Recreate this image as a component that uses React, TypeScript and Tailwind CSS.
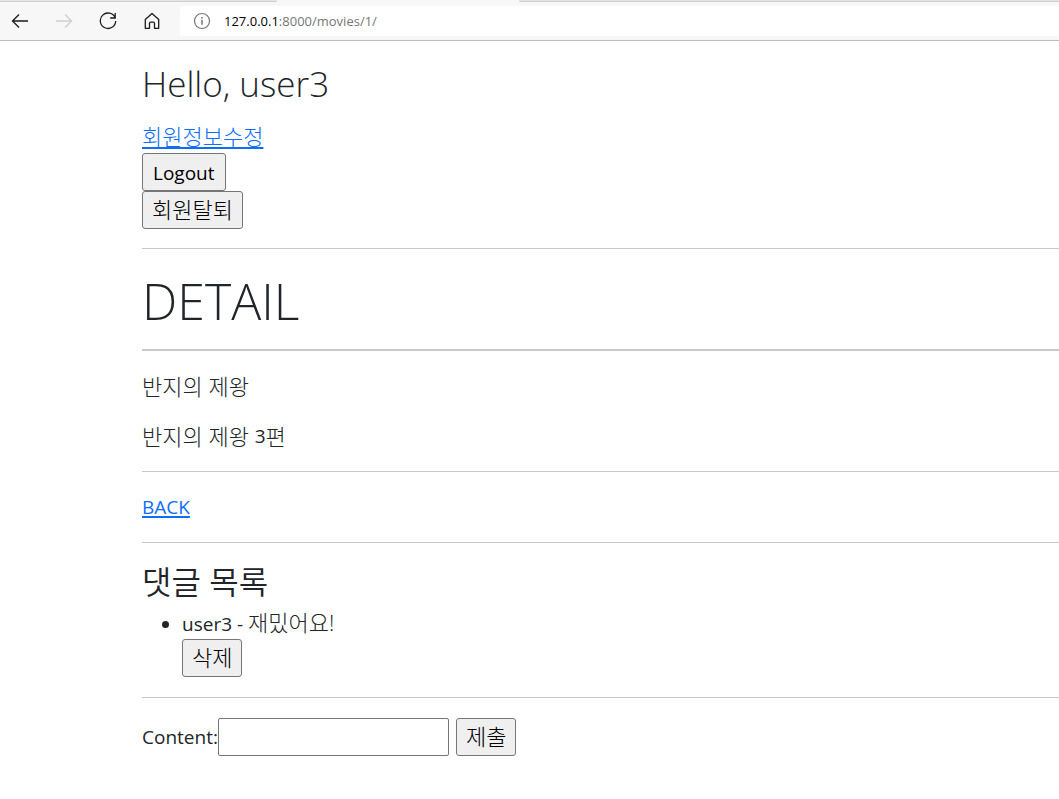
import type { ReactNode } from "react";

const icon = {
  width: 18,
  height: 18,
  viewBox: "0 0 18 18",
  fill: "none",
  stroke: "currentColor",
  strokeWidth: 1.3,
};

function Ko({ children }: { children: ReactNode }) {
  return <span className="text-[22px] font-light leading-none">{children}</span>;
}

const buttonBase =
  "flex h-[38px] items-center justify-center rounded-[3px] border border-[#767676] bg-[#efefef] text-black";

function Button({ children }: { children: string }) {
  return (
    <button type="button" className={`${buttonBase} px-[10px] pt-0.5`}>
      {children}
    </button>
  );
}

function KoButton({ children }: { children: string }) {
  return (
    <button type="button" className={`${buttonBase} px-[9px] pb-0.5`}>
      <Ko>{children}</Ko>
    </button>
  );
}

function Rule() {
  return <hr className="border-t border-[#c8c9ca]" />;
}

function BrowserBar() {
  return (
    <header className="border-b border-[#bdbdbd] bg-[#f7f7f7]">
      <div className="flex h-[2px]">
        <div className="w-[277px] rounded-br-sm border-b border-[#cfcfcf] bg-[#e4e4e4]" />
        <div className="w-[242px]" />
        <div className="flex-1 rounded-bl-sm border-b border-[#cfcfcf] bg-[#e4e4e4]" />
      </div>
      <div className="flex h-[38px] items-center">
        <nav className="flex w-[180px] shrink-0 items-center gap-[26px] pl-[11px] text-[#1b1b1b]">
          <button type="button" aria-label="Back">
            <svg {...icon}>
              <path d="M17 9H1.500M8 2.500 1.500 9 8 15.500" />
            </svg>
          </button>
          <button type="button" aria-label="Forward" className="text-[#cfcfcf]">
            <svg {...icon}>
              <path d="M1 9h15.500M10 2.500 16.500 9 10 15.500" />
            </svg>
          </button>
          <button type="button" aria-label="Refresh">
            <svg {...icon}>
              <path d="M16.200 6A7.700 7.700 0 1 0 16.700 9M16.200 1v5h-5" />
            </svg>
          </button>
          <button type="button" aria-label="Home">
            <svg {...icon} strokeLinejoin="round">
              <path d="M2.300 7.400 9 1.500l6.700 5.900V16.300h-4.200v-4.800a1.300 1.300 0 0 0-1.300-1.300H7.800a1.300 1.300 0 0 0-1.300 1.300v4.800H2.300Z" />
            </svg>
          </button>
        </nav>
        <div className="flex h-[30px] flex-1 items-center rounded-l bg-white pl-[13px] font-['Open_Sans','Noto_Sans',sans-serif] text-[13px] text-[#767676]">
          <svg {...icon} strokeWidth={1.2} className="mr-[13px]" aria-hidden="true">
            <circle cx="9" cy="9" r="7.500" />
            <path d="M9 7.800v5M9 5v1.500" strokeWidth="1.500" />
          </svg>
          <span>
            <span className="text-black">127.0.0.1</span>:8000/movies/1/
          </span>
        </div>
      </div>
    </header>
  );
}

export default function App() {
  return (
    <div className="min-h-screen bg-white font-['Open_Sans','Noto_Sans_CJK_KR',sans-serif] text-[19px] font-[380] leading-[30px] text-[#212529]">
      <BrowserBar />
      <main className="pl-[142px]">
        <h2 className="pt-[22px] text-[35px] font-[340] leading-[42px]">Hello, user3</h2>
        <div className="mt-[18px] flex h-[30px] items-center">
          <a href="#edit" className="text-[#0d6efd] underline decoration-2 underline-offset-2">
            <Ko>회원정보수정</Ko>
          </a>
        </div>
        <div className="flex flex-col items-start pb-[19px]">
          <Button>Logout</Button>
          <KoButton>회원탈퇴</KoButton>
        </div>
        <Rule />
        <h1 className="pt-[22px] pb-[18px] text-[50px] font-[340] leading-[60px]">DETAIL</h1>
        <hr className="border-t-2 border-[#c8c9ca]" />
        <p className="mt-5 flex h-[30px] items-center">
          <Ko>반지의 제왕</Ko>
        </p>
        <p className="mt-5 mb-5 flex h-[30px] items-center">
          <Ko>반지의 제왕&nbsp;</Ko>3<Ko>편</Ko>
        </p>
        <Rule />
        <div className="py-5">
          <a href="#movies" className="text-[#0d6efd] underline decoration-2 underline-offset-2">
            BACK
          </a>
        </div>
        <Rule />
        <h3 className="pt-5 pb-2 text-[32px] font-[350] leading-[38px]">댓글 목록</h3>
        <ul className="mb-5 list-disc pl-10">
          <li>
            user3 - <Ko>재밌어요!</Ko>
            <div className="flex">
              <KoButton>삭제</KoButton>
            </div>
          </li>
        </ul>
        <Rule />
        <form className="flex items-center pt-5 pb-10">
          <label htmlFor="content">Content:</label>
          <input
            id="content"
            type="text"
            className="mr-[7px] h-[38px] w-[231px] rounded-[2px] border border-[#767676] px-1"
          />
          <KoButton>제출</KoButton>
        </form>
      </main>
    </div>
  );
}
